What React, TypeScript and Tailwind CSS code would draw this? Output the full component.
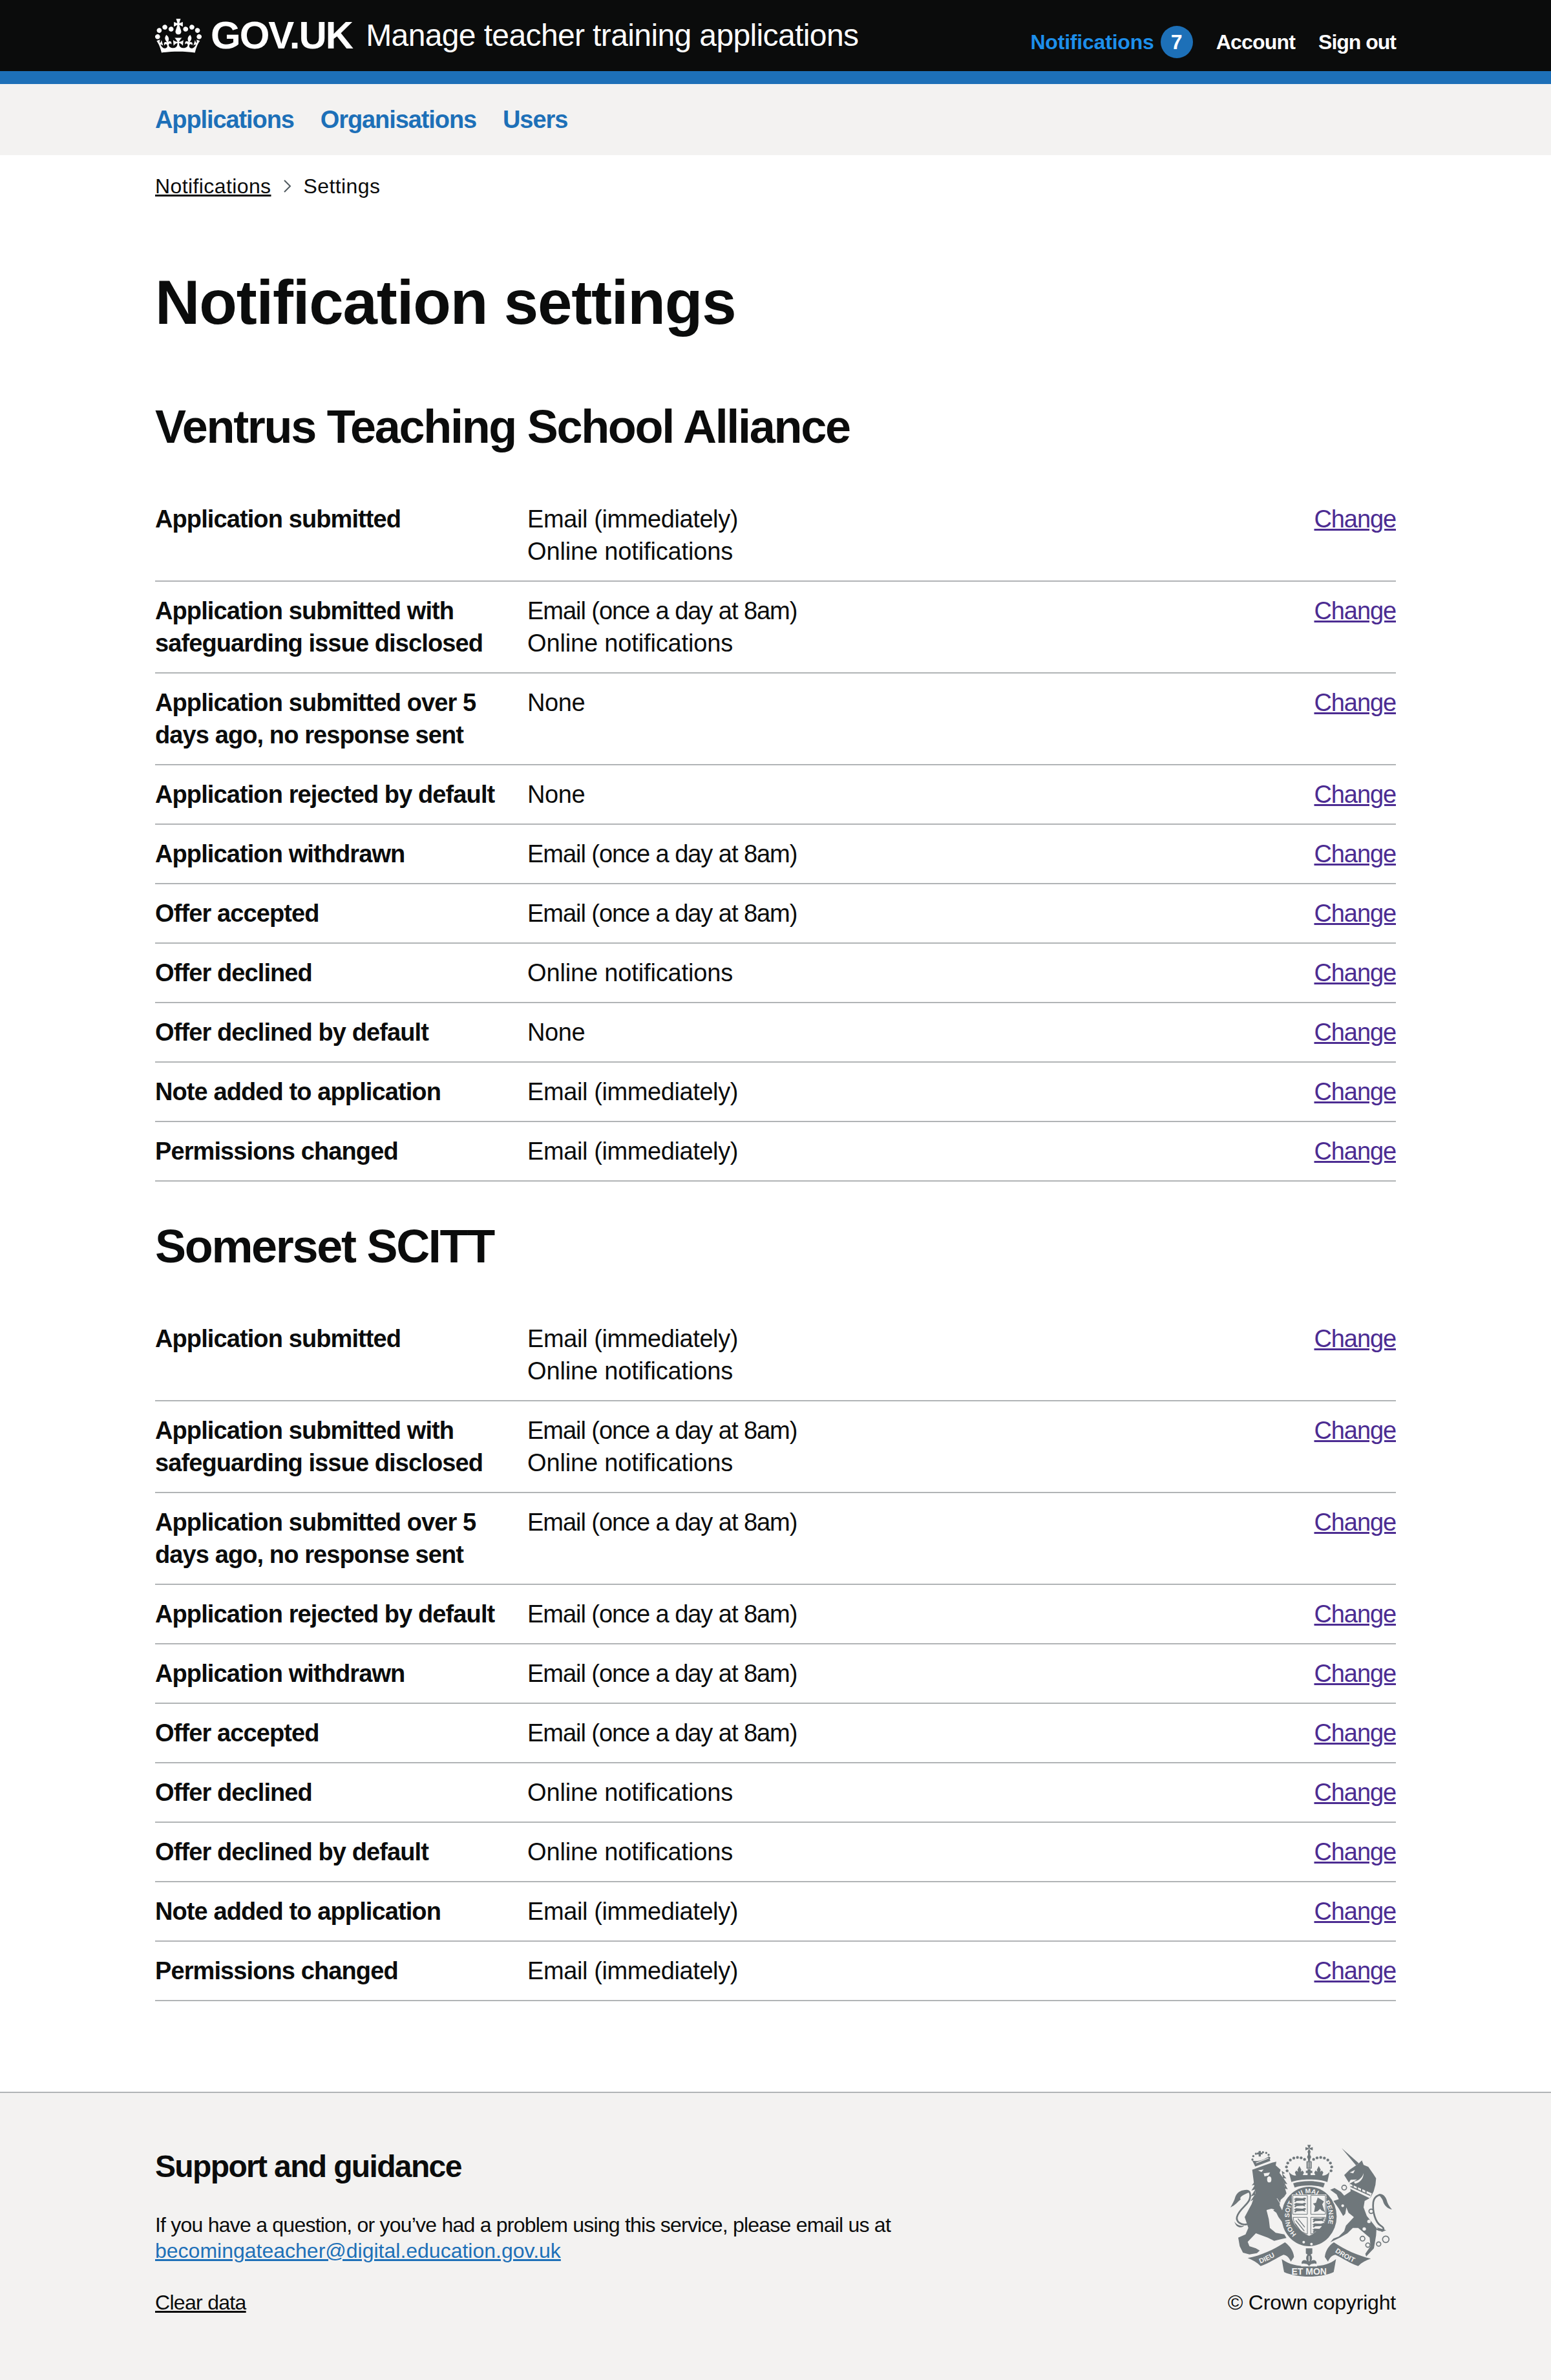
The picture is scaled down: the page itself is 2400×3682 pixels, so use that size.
import React from 'react';

type Row = { label: string; values: string[] };

const EMAIL_NOW = 'Email (immediately)';
const EMAIL_DAILY = 'Email (once a day at 8am)';
const ONLINE = 'Online notifications';

const valueTracking: Record<string, string> = {
    [EMAIL_NOW]: 'tracking-[-0.4px]',
    [EMAIL_DAILY]: 'tracking-[-1.05px]',
    [ONLINE]: 'tracking-[-0.15px]',
    None: 'tracking-[-0.4px]',
};

const ventrus: Row[] = [
    { label: 'Application submitted', values: [EMAIL_NOW, ONLINE] },
    { label: 'Application submitted with safeguarding issue disclosed', values: [EMAIL_DAILY, ONLINE] },
    { label: 'Application submitted over 5 days ago, no response sent', values: ['None'] },
    { label: 'Application rejected by default', values: ['None'] },
    { label: 'Application withdrawn', values: [EMAIL_DAILY] },
    { label: 'Offer accepted', values: [EMAIL_DAILY] },
    { label: 'Offer declined', values: [ONLINE] },
    { label: 'Offer declined by default', values: ['None'] },
    { label: 'Note added to application', values: [EMAIL_NOW] },
    { label: 'Permissions changed', values: [EMAIL_NOW] },
];

const somerset: Row[] = [
    { label: 'Application submitted', values: [EMAIL_NOW, ONLINE] },
    { label: 'Application submitted with safeguarding issue disclosed', values: [EMAIL_DAILY, ONLINE] },
    { label: 'Application submitted over 5 days ago, no response sent', values: [EMAIL_DAILY] },
    { label: 'Application rejected by default', values: [EMAIL_DAILY] },
    { label: 'Application withdrawn', values: [EMAIL_DAILY] },
    { label: 'Offer accepted', values: [EMAIL_DAILY] },
    { label: 'Offer declined', values: [ONLINE] },
    { label: 'Offer declined by default', values: [ONLINE] },
    { label: 'Note added to application', values: [EMAIL_NOW] },
    { label: 'Permissions changed', values: [EMAIL_NOW] },
];

function Crown() {
    return (
        <svg viewBox="0 0 132 97" className="w-[72px] h-[53px] shrink-0" fill="currentColor" aria-hidden="true">
            <path
                fillRule="evenodd"
                d="M25 30.2c3.5 1.5 7.7-.2 9.1-3.7 1.5-3.6-.2-7.8-3.9-9.2-3.6-1.4-7.6.3-9.1 3.9-1.4 3.5.3 7.5 3.9 9zM9 39.5c3.6 1.5 7.8-.2 9.2-3.7 1.5-3.6-.2-7.8-3.9-9.1-3.6-1.5-7.6.2-9.1 3.8-1.4 3.5.3 7.5 3.8 9zM4.4 57.2c3.5 1.5 7.7-.2 9.1-3.8 1.5-3.6-.2-7.7-3.9-9.1-3.5-1.5-7.6.3-9.1 3.8-1.4 3.5.3 7.6 3.9 9.1zm38.3-21.4c3.5 1.5 7.7-.2 9.1-3.8 1.5-3.6-.2-7.7-3.9-9.1-3.6-1.5-7.6.3-9.1 3.8-1.3 3.6.4 7.7 3.9 9.1zm64.4-5.6c-3.6 1.5-7.8-.2-9.1-3.7-1.5-3.6.2-7.8 3.8-9.2 3.6-1.4 7.7.3 9.2 3.9 1.3 3.5-.4 7.5-3.9 9zm15.9 9.3c-3.6 1.5-7.7-.2-9.1-3.7-1.5-3.6.2-7.8 3.7-9.1 3.6-1.5 7.7.2 9.2 3.8 1.5 3.5-.3 7.5-3.8 9zm4.7 17.7c-3.6 1.5-7.8-.2-9.2-3.8-1.5-3.6.2-7.7 3.9-9.1 3.6-1.5 7.7.3 9.2 3.8 1.3 3.5-.4 7.6-3.9 9.1zM89.3 35.8c-3.6 1.5-7.8-.2-9.2-3.8-1.4-3.6.2-7.7 3.9-9.1 3.6-1.5 7.7.3 9.2 3.8 1.4 3.6-.3 7.7-3.9 9.1zM69.7 17.7l8.9 4.7V9.3l-8.9 2.8c-.2-.3-.5-.6-.9-.9L72.4 0H59.6l3.5 11.2c-.3.3-.6.5-.9.9l-8.8-2.8v13.1l8.8-4.7c.3.3.6.7.9.9l-5 15.4v.1c-.2.8-.4 1.6-.4 2.4 0 4.1 3.1 7.5 7 8.1h.2c.3 0 .7.1 1 .1.4 0 .7 0 1-.1h.2c4-.6 7.1-4.1 7.1-8.1 0-.8-.1-1.7-.4-2.4V34l-5.1-15.4c.4-.2.7-.6 1-.9zM66 92.8c16.9 0 32.8 1.1 47.1 3.2 4-16.9 8.9-26.7 14-33.5l-9.6-3.4c1 4.9 1.1 7.2 0 10.2-1.5-1.4-3-4.3-4.2-8.7L108.6 76c2.8-2 5-3.2 7.5-3.3-4.4 9.4-10 11.9-13.6 11.2-4.3-.8-6.3-4.6-5.6-7.9 1-4.7 5.7-5.9 8-.5 4.3-8.7-3-11.4-7.6-8.8 7.1-7.2 7.9-13.5 2.1-21.1-8 6.1-8.1 12.3-4.5 20.8-4.7-5.4-12.1-2.5-9.5 6.2 3.4-5.2 7.9-2 7.2 3.1-.6 4.3-6.4 7.8-13.5 7.2-10.3-.9-10.9-8-11.2-13.8 2.5-.5 7.1 1.8 11 7.3L80.2 60c-4.1 4.4-8 5.3-12.3 5.4 1.4-4.4 8-11.6 8-11.6H55.5s6.4 7.2 7.9 11.6c-4.2-.1-8-1-12.3-5.4l1.4 16.4c3.9-5.5 8.5-7.7 10.9-7.3-.3 5.8-.9 12.8-11.1 13.8-7.2.6-12.9-2.9-13.5-7.2-.7-5 3.8-8.3 7.1-3.1 2.7-8.7-4.6-11.6-9.4-6.2 3.7-8.5 3.6-14.7-4.6-20.8-5.8 7.6-5 13.9 2.2 21.1-4.7-2.6-11.9.1-7.7 8.8 2.3-5.5 7.1-4.2 8.1.5.7 3.3-1.3 7.1-5.7 7.9-3.5.7-9-1.8-13.5-11.2 2.5.1 4.7 1.3 7.5 3.3l-4.7-15.4c-1.2 4.4-2.7 7.2-4.3 8.7-1.1-3-.9-5.3 0-10.2l-9.5 3.4c5 6.9 9.9 16.7 14 33.5 14.8-2.1 30.8-3.2 47.7-3.2z"
            />
        </svg>
    );
}

const INK = '#6f777b';
const PAPER = '#f3f2f1';
const SANS = "'Liberation Sans', sans-serif";

// royal arms, coordinates are 3x the pixels of the reference crest
function Crest({ className }: { className: string }) {
    const crownDots = [[275,130],[272,112],[278,94],[290,80],[306,71],[323,68],[340,70],[356,77],[398,77],[414,70],[431,68],[448,71],[464,80],[476,94],[482,112],[479,130]];
    const lionDots = [[114,78],[118,62],[130,51],[146,46],[163,44],[178,47],[189,56],[192,70]];
    const lions = (x: number, y: number) => (
        <g key={`${x}-${y}`} fill={INK}>
            <path d={`M${x} ${y + 6}l10-6 30 2 12-4 6 6-8 4 4 8-12-4-28 2-8 6-4-6 6-4z`} />
            <path d={`M${x} ${y + 30}l10-6 30 2 12-4 6 6-8 4 4 8-12-4-28 2-8 6-4-6 6-4z`} />
            <path d={`M${x} ${y + 54}l10-6 30 2 12-4 6 6-8 4 4 8-12-4-28 2-8 6-4-6 6-4z`} />
        </g>
    );
    const fleur = (x: number) => (
        <path key={x} fill={INK} d={`M${x} 108l9 17-3 9 9-5 6 9-6 14h-30l-6-14 6-9 9 5-3-9z`} />
    );
    return (
        <svg viewBox="0 0 780 630" className={className} aria-hidden="true">
            {/* crown */}
            <path fill={INK} d="M369 10h16l-6 16h-4zM375 30h4l6 15h-16zM360 20v15l15-6v-4zM394 20v15l-15-6v-4z" />
            <path fill={INK} d="M372 44h10v42h-10z" />
            <circle cx="377" cy="66" r="9" fill={INK} />
            <path fill={INK} d="M365 86h24v34h-24z" />
            <path fill={PAPER} d="M371 90h3v26h-3zM380 90h3v26h-3z" />
            {crownDots.map(([x, y]) => <circle key={x} cx={x} cy={y} r="6.5" fill={INK} />)}
            {fleur(332)}
            {fleur(422)}
            <path fill={INK} d="M370 122h14v8h8v10h-8v12h-14v-12h-8v-10h8z" />
            <path fill={INK} d="M283 135c12 15 27 20 37 15h115c10 5 25 0 37-15l-10 47c-42-16-127-16-167 0z" />
            <path fill={INK} d="M303 188c40-14 107-14 147 0l-7 20c-35-13-98-13-133 0z" />

            {/* lion */}
            <path fill={INK} d="M113 125l47-17 45-16 20-4-3 17 23 20-5 15 18 25 4 35 10 35-10 15-17 15-5 25 10 20 20 35 15 15-10 25-25-20-15-20-10-20-20-15-25 5 10 40 5 40 27 23 40 7 10 17-27 6-30 7-30-15-55-20-38 40 8 20 30 10 18 10-13 12-35 6-30-8-15-30-7-40 34-15 13-30-17-50 32-60 18-50-8-55z" />
            <path fill={INK} d="M125 180l-14 18 16-4-18 28 19-6-22 34 18-8-20 30 24-14zM250 130l16 12-12 2 18 22-14-2 18 28-12-2 14 26-14-4z" />
            <path fill="none" stroke={INK} strokeWidth="8" d="M75 225c25-10 35 10 25 40-10 25-50 45-58 80-4 20 18 40 48 33" />
            <path fill={INK} d="M105 228c-30-18-60-3-70 22-5 20-15 35-23 50 23-10 33-25 48-38-10-7 10-22 45-34zM30 365c10 15 25 22 45 20-5 10-35 15-45-20z" />
            <path fill={PAPER} d="M140 128l26-4-10 12zM166 142l30-4-8 14-18 4z" />
            <ellipse cx="192" cy="170" rx="10" ry="14" fill={PAPER} />
            <path fill="none" stroke={PAPER} strokeWidth="3" d="M228 258l46 72" />
            {lionDots.map(([x, y]) => <circle key={x} cx={x} cy={y} r="5" fill={INK} />)}
            <path fill={INK} d="M113 82c20 8 55-2 78-20l6 22-70 26z" />
            <path fill={INK} d="M143 38h10v8h8v8h-8v10h-10V54h-8v-8h8z" />
            <path fill={PAPER} d="M130 92l58-22 2 3-58 22z" />
            <path fill={PAPER} d="M180 312l22-6 14 4-10 8 10 4-22-2-4 6-10-10z" />

            {/* unicorn */}
            <g transform="translate(390 0)">
                <path fill={INK} d="M138 25l80 70-13 10z" />
                <path fill={INK} d="M205 105l13-10 14-13 8 21 22 9 23 33 13 20-3 30-8 30-15 30-27 15-5 30 15 40 45 55-2 35-10 60-36 38-4-13 24-35-4-40-53-45h-25l-25 25-35 20-45 22 15-17 25-10 25-25 8-25 37-40-25-20-10-25-5 30-10 10-20-35-25-35 25-8-10-22-30-22 20-8 30 18 15 17 30-20-5-35 35-20-30 2-8 13-22-35 25-25z" />
                <path fill={PAPER} d="M195 180c25-5 40-20 45-40 0 25-15 45-40 50zM176 138l24-12-8 16z" />
                <path fill={PAPER} d="M175 190l103 45-8 23-95-46z" />
                <path fill={INK} d="M180 200l92 42-2 5-92-42zM188 194h6v17h-6zM208 203h6v17h-6zM228 212h6v17h-6zM248 221h6v17h-6z" />
                <path fill="none" stroke={INK} strokeWidth="8" d="M300 400c30 15 45 0 20-15-25-15-40-65-35-110 5-25 25-37 40-30" />
                <path fill={INK} d="M310 238c25-3 35 17 40 37 5 15 15 25 22 35-22-5-37-20-42-40-5-15-15-20-20-32zM300 392l45 14-20 8z" />
                <circle cx="150" cy="208" r="11" fill={PAPER} stroke={INK} strokeWidth="5" />
                <circle cx="143" cy="292" r="9" fill={PAPER} stroke={INK} strokeWidth="5" />
                <circle cx="275" cy="318" r="10" fill={PAPER} stroke={INK} strokeWidth="5" />
                <circle cx="265" cy="365" r="8" fill={PAPER} />
                <circle cx="243" cy="400" r="8" fill={PAPER} />
                <circle cx="235" cy="445" r="11" fill={PAPER} stroke={INK} strokeWidth="5" />
                <circle cx="260" cy="475" r="10" fill={PAPER} stroke={INK} strokeWidth="5" />
                <circle cx="310" cy="470" r="10" fill={PAPER} stroke={INK} strokeWidth="5" />
                <circle cx="343" cy="448" r="15" fill={PAPER} stroke={INK} strokeWidth="5" />
            </g>

            {/* garter and shield */}
            <ellipse cx="377" cy="342" rx="128" ry="138" fill={INK} />
            <path id="garter-line" fill="none" d="M318 425A92 108 0 1 1 436 425" />
            <text fill={PAPER} fontSize="30" fontWeight="700" fontFamily={SANS}>
                <textPath href="#garter-line" textLength="440" lengthAdjust="spacingAndGlyphs">HONI SOIT QUI MAL Y PENSE</textPath>
            </text>
            <path fill={PAPER} d="M297 240h160v95c0 45-35 75-80 97-45-22-80-52-80-97z" />
            <path fill="none" stroke={INK} strokeWidth="3" d="M301 244h68v88h-68zM385 244h68v88h-68z" />
            {lions(306, 256)}
            {lions(392, 350)}
            <path fill={INK} d="M400 322l5-28-10-12 14-4 8-24 13 8 16 10-8 14 8 24 5 12-15-7-8-8-11 10z" />
            <path fill="none" stroke={INK} strokeWidth="3" d="M303 346h66v78c-32-10-62-36-66-78zM385 346h68c-2 38-32 66-68 78z" />
            <path fill="none" stroke={INK} strokeWidth="4" d="M315 360l40 50M325 352l32 40M312 375l30 40" />
            <circle cx="352" cy="461" r="6" fill={PAPER} />
            <circle cx="388" cy="470" r="6" fill={PAPER} />

            {/* motto */}
            <path fill={INK} d="M92 535C150 525 215 495 265 462c25 18 40 43 42 68l-15 22c-7-17-17-30-34-32-33 15-68 40-106 52-17-17-37-27-60-37z" />
            <path fill={INK} d="M664 538C606 525 540 495 492 462c-25 15-40 43-42 68l15 22c7-17 17-30 34-32 33 15 68 40 106 52 17-17 37-27 59-34z" />
            <path fill={INK} d="M250 540c35 25 70 33 127 33s95-8 125-33l-8 45-3 15c-60 28-170 28-230 0l-3-15z" />
            <path id="motto-left" fill="none" d="M150 560c35-12 70-32 102-52" />
            <path id="motto-right" fill="none" d="M497 506c33 23 73 46 115 63" />
            <text fill={PAPER} fontSize="32" fontWeight="700" fontFamily={SANS}>
                <textPath href="#motto-left">DIEU</textPath>
            </text>
            <text fill={PAPER} fontSize="32" fontWeight="700" fontFamily={SANS}>
                <textPath href="#motto-right">DROIT</textPath>
            </text>
            <text x="377" y="612" textAnchor="middle" fill={PAPER} fontSize="42" fontWeight="700" fontFamily={SANS}>ET MON</text>
            <path fill={PAPER} d="M340 486h74v88h-74z" />
            <path fill={INK} d="M362 490h30v24l-15 10-15-10z" />
            <path fill={INK} d="M377 512c16 12 16 26 10 36 14-8 28 0 24 14-10-4-18 0-26 2l-8 8-8-8c-8-2-16-6-26-2-4-14 10-22 24-14-6-10-6-24 10-36z" />
            <path fill={PAPER} d="M375 526h4v24h-4z" />
        </svg>
    );
}

function Section({ title, rows }: { title: string; rows: Row[] }) {
    return (
        <section>
            <h2 className="text-[72px] leading-[80px] font-bold tracking-[-2.3px]">{title}</h2>
            <div className="mt-[58px]">
                {rows.map((row) => (
                    <div key={row.label} className="grid grid-cols-[576px_960px_384px] border-b-2 border-[#b1b4b6] py-5 text-[38px] leading-[50px]">
                        <div className="pr-10 font-bold tracking-[-0.9px]">{row.label}</div>
                        <div className="pr-10">
                            {row.values.map((value) => (
                                <div key={value} className={valueTracking[value]}>{value}</div>
                            ))}
                        </div>
                        <div className="text-right">
                            <a href="#" className="text-[#4c2c92] underline tracking-[-1.1px]">Change</a>
                        </div>
                    </div>
                ))}
            </div>
        </section>
    );
}

export default function App() {
    return (
        <div className="font-['Liberation_Sans',sans-serif] text-[#0b0c0c] bg-white">
            <header className="h-[130px] bg-[#0b0c0c] border-b-[20px] border-[#1d70b8] text-white">
                <div className="w-[1920px] mx-auto h-full flex items-center justify-between">
                    <div className="flex items-center">
                        <Crown />
                        <span className="ml-3.5 text-[60px] leading-none font-bold tracking-[-2px]">GOV.UK</span>
                        <span className="ml-[21px] text-[48px] leading-none tracking-[-0.62px]">Manage teacher training applications</span>
                    </div>
                    <nav className="pt-5 flex items-center text-[32px] font-bold">
                        <a href="#" className="text-[#1d8feb] tracking-[-0.2px]">Notifications</a>
                        <span className="ml-2.5 w-[50px] h-[50px] rounded-full bg-[#1d70b8] flex items-center justify-center">7</span>
                        <a href="#" className="ml-9 tracking-[-0.8px]">Account</a>
                        <a href="#" className="ml-9 tracking-[-1px]">Sign out</a>
                    </nav>
                </div>
            </header>

            <nav className="h-[110px] bg-[#f3f2f1]">
                <div className="w-[1920px] mx-auto h-full flex items-center gap-[41px] text-[38px] font-bold tracking-[-1.1px] text-[#1d70b8]">
                    <a href="#">Applications</a>
                    <a href="#">Organisations</a>
                    <a href="#">Users</a>
                </div>
            </nav>

            <main className="w-[1920px] mx-auto">
                <div className="pt-7 flex items-center text-[32px] leading-10 tracking-[0.4px]">
                    <a href="#" className="underline">Notifications</a>
                    <svg viewBox="0 0 14 24" className="w-3.5 h-6 mx-[18px]" fill="none" stroke="#505a5f" strokeWidth="2" aria-hidden="true">
                        <path d="M2 3l9 9-9 9" />
                    </svg>
                    <span>Settings</span>
                </div>

                <h1 className="mt-[110px] text-[96px] leading-[100px] font-bold tracking-[-1.15px]">Notification settings</h1>

                <div className="mt-[102px]">
                    <Section title="Ventrus Teaching School Alliance" rows={ventrus} />
                </div>
                <div className="mt-[60px]">
                    <Section title="Somerset SCITT" rows={somerset} />
                </div>
            </main>

            <footer className="mt-[140px] bg-[#f3f2f1] border-t-2 border-[#b1b4b6] pb-[100px]">
                <div className="w-[1920px] mx-auto flex justify-between items-end">
                    <div className="pt-[84px]">
                        <h2 className="text-[48px] leading-[60px] font-bold tracking-[-1.65px]">Support and guidance</h2>
                        <p className="mt-10 text-[32px] leading-10">
                            <span className="tracking-[-0.77px]">If you have a question, or you’ve had a problem using this service, please email us at</span>
                            <br />
                            <a href="#" className="text-[#1d70b8] underline">becomingateacher@digital.education.gov.uk</a>
                        </p>
                        <p className="mt-10 text-[32px] leading-10">
                            <a href="#" className="underline tracking-[-0.7px]">Clear data</a>
                        </p>
                    </div>
                    <div className="flex flex-col items-end">
                        <Crest className="w-[260px] h-[210px]" />
                        <div className="mt-[17px] text-[32px] leading-10 tracking-[-0.2px]">© Crown copyright</div>
                    </div>
                </div>
            </footer>
        </div>
    );
}
